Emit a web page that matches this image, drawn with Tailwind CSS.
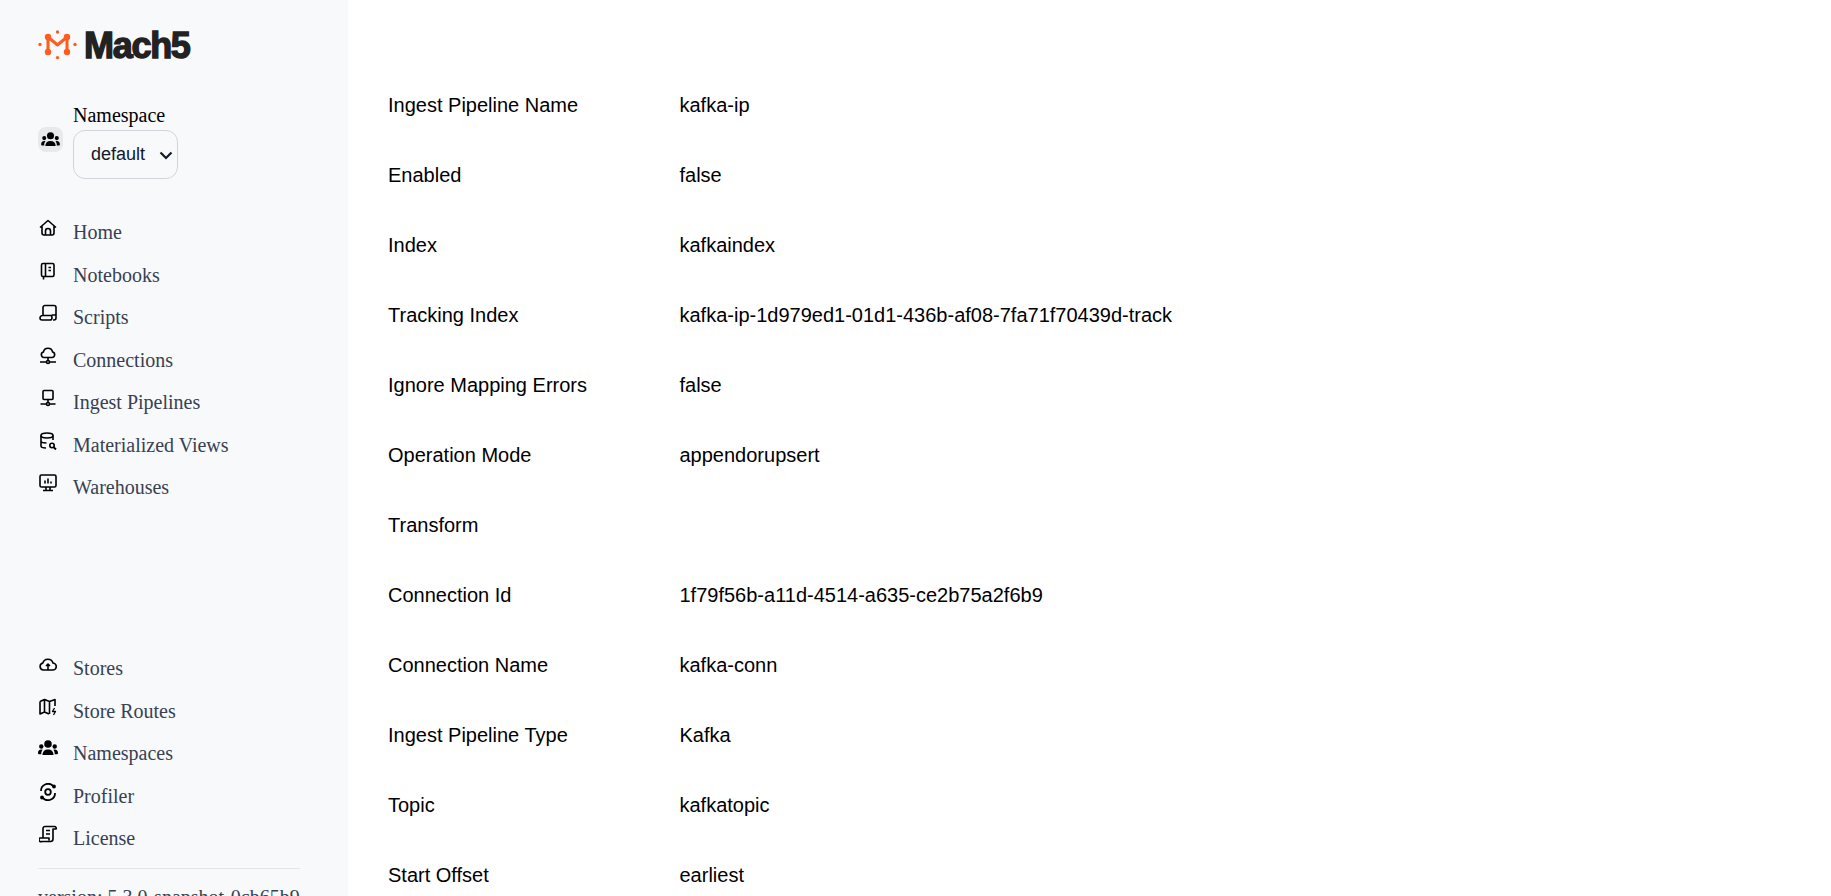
<!DOCTYPE html>
<html lang="en">
<head>
  <meta charset="UTF-8" />
  <title>Ingest Pipeline - Mach5</title>
  <script src="https://cdn.jsdelivr.net/npm/@tailwindcss/browser@4"></script>
</head>
<body class="h-screen overflow-hidden bg-white flex font-['Liberation_Serif',serif]">
  <!-- Sidebar -->
  <aside class="w-[348px] h-[896px] shrink-0 overflow-hidden bg-[#f8f9fb] pl-[38px] pr-[48px] pt-[28px] flex flex-col">
    <div class="flex items-center h-[34px]">
      <svg class="w-[40px] h-[30px]" viewBox="0 0 40 30" fill="none" stroke="#ff5c1f" stroke-width="3">
        <path d="M10 22 L10 7 L19.5 15 L29 7 L29 22" stroke-linejoin="round" />
        <g fill="#ff5c1f" stroke="none">
          <circle cx="10" cy="7" r="3.2" /><circle cx="29" cy="7" r="3.2" />
          <circle cx="10" cy="22" r="3.2" /><circle cx="29" cy="22" r="3.2" />
          <circle cx="19.5" cy="2" r="1.7" /><circle cx="19.5" cy="27.6" r="1.7" />
          <circle cx="2" cy="14.5" r="1.7" /><circle cx="37" cy="14.5" r="1.7" />
        </g>
      </svg>
      <span class="ml-[6px] mt-[2px] font-['Liberation_Sans',sans-serif] font-bold text-[36px] leading-none tracking-[-1.3px] text-[#222222] [-webkit-text-stroke:1.4px_#222222]">Mach5</span>
    </div>

    <div class="flex items-center mt-[41px]">
      <div class="w-[25px] h-[25px] mb-[4px] rounded-lg bg-[#e6eaed] flex items-center justify-center">
        <svg class="w-[19px] h-[15px]" viewBox="0 0 20 16" fill="#000"><circle cx="10" cy="4" r="3.8"/><circle cx="3.3" cy="6.5" r="2.2"/><circle cx="16.7" cy="6.5" r="2.2"/><path d="M4.5 15c0-3.500 2-5.500 5.500-5.500s5.500 2 5.500 5.500z"/><path d="M0 13c0-2 1.200-3.500 3.300-3.500.6 0 1 .1 1.400.3-.9 1-1.400 2.300-1.400 3.700v.8h-2C.5 14.300 0 13.800 0 13zM20 13c0-2-1.200-3.500-3.300-3.500-.6 0-1 .1-1.400.3.9 1 1.400 2.300 1.400 3.700v.8h2c.8 0 1.300-.5 1.300-1.300z"/></svg>
      </div>
      <div class="ml-[10px]">
        <div class="text-[20px] leading-[24px] text-black">Namespace</div>
        <div class="w-[105px] h-[49px] mt-[3px] rounded-[12px] border border-[#d1d5db] bg-[#f8f9fb] flex items-center justify-between pl-[17px] pr-[4px] font-['Liberation_Sans',sans-serif] text-[18px] text-[#111827]">
          <span>default</span>
          <svg class="w-[14px] h-[14px]" viewBox="0 0 14 14" fill="none" stroke="#111827" stroke-width="2.2"><path d="M1.500 4.500L7 10l5.500-5.500"/></svg>
        </div>
      </div>
    </div>

    <nav class="mt-[39px] text-[20px] leading-[28px] text-[#374151] flex flex-col gap-[14.5px]">
      <a class="flex items-start gap-[16px] pl-[1px]"><svg class="w-[18px] h-[18px] mt-[1px] shrink-0" viewBox="0 0 18 18" fill="none" stroke="#000" stroke-width="1.6" stroke-linejoin="round"><path d="M1 8.500L9 1.500l8 7M3 7v7a2 2 0 0 0 2 2h8a2 2 0 0 0 2-2V7M6.500 16v-4a2.500 2.500 0 0 1 5 0v4"/></svg>Home</a>
      <a class="flex items-start gap-[16px] pl-[1px]"><svg class="w-[18px] h-[18px] mt-[1px] shrink-0" viewBox="0 0 18 18" fill="none" stroke="#000" stroke-width="1.6"><path d="M4 1.500h9.500a1.500 1.500 0 0 1 1.500 1.500v10a1.500 1.500 0 0 1-1.500 1.500H4A1.500 1.500 0 0 1 2.500 13V3A1.500 1.500 0 0 1 4 1.500zM6.500 1.500v13M9.500 5.500H12M9.500 8.500H12M4.500 14.500v3"/></svg>Notebooks</a>
      <a class="flex items-start gap-[16px] pl-[1px]"><svg class="w-[18px] h-[18px] mt-[1px] shrink-0" viewBox="0 0 18 18" fill="none" stroke="#000" stroke-width="1.6" stroke-linejoin="round"><path d="M4 11V3.500a2 2 0 0 1 2-2h9a2 2 0 0 1 2 2V11h-4.500M1 14a2.500 2.500 0 0 1 2.500-2.500h8c1 0 1.500.7 1.500 2.200 0 1.300-.5 2.300-2 2.300H3A2 2 0 0 1 1 14zM14 16h1a2 2 0 0 0 2-2v-3"/></svg>Scripts</a>
      <a class="flex items-start gap-[16px] pl-[1px]"><svg class="w-[18px] h-[18px] mt-[1px] shrink-0" viewBox="0 0 18 18" fill="none" stroke="#000" stroke-width="1.6" stroke-linejoin="round"><path d="M5 10.500a2.800 2.800 0 0 1-.6-5.500 4.700 4.700 0 0 1 9.200 0 2.800 2.800 0 0 1-.6 5.500zM9 10.500V13M1 15h6M11 15h6"/><circle cx="9" cy="15" r="1.5"/></svg>Connections</a>
      <a class="flex items-start gap-[16px] pl-[1px]"><svg class="w-[18px] h-[18px] mt-[1px] shrink-0" viewBox="0 0 18 18" fill="none" stroke="#000" stroke-width="1.6" stroke-linejoin="round"><path d="M5 1.500h8a1 1 0 0 1 1 1v7a1 1 0 0 1-1 1H5a1 1 0 0 1-1-1v-7a1 1 0 0 1 1-1zM9 10.500V13M1.500 15H7M11 15h5.500"/><circle cx="9" cy="15" r="1.5"/></svg>Ingest Pipelines</a>
      <a class="flex items-start gap-[16px] pl-[1px]"><svg class="w-[18px] h-[18px] mt-[1px] shrink-0" viewBox="0 0 18 18" fill="none" stroke="#000" stroke-width="1.6"><ellipse cx="8" cy="3.5" rx="6" ry="2.5"/><path d="M2 3.500V14c0 1.200 2 2 5 2M14 3.500v4.500M2 9c0 1.200 2.500 2 5.500 2"/><circle cx="13" cy="13.5" r="2.2"/><path d="M14.600 15.100L17 17.500" stroke-width="2"/></svg>Materialized Views</a>
      <a class="flex items-start gap-[16px] pl-[1px]"><svg class="w-[18px] h-[18px] mt-[1px] shrink-0" viewBox="0 0 18 18" fill="none" stroke="#000" stroke-width="1.6" stroke-linejoin="round"><path d="M2.500 1h13A1.500 1.500 0 0 1 17 2.500v9a1.500 1.500 0 0 1-1.500 1.500h-13A1.500 1.500 0 0 1 1 11.500v-9A1.500 1.500 0 0 1 2.500 1zM7 13v3.500M11 13v3.500M4 16.500h10M6 9.500V6.500M9 9.500V4.500M12 9.500V7.500"/></svg>Warehouses</a>
    </nav>

    <nav class="mt-[153px] text-[20px] leading-[28px] text-[#374151] flex flex-col gap-[14.5px]">
      <a class="flex items-start gap-[16px] pl-[1px]"><svg class="w-[18px] h-[18px] mt-[1px] shrink-0" viewBox="0 0 18 18" fill="none" stroke="#000" stroke-width="1.6" stroke-linejoin="round"><path d="M4.500 15a3.500 3.500 0 0 1-.7-6.900 5.300 5.300 0 0 1 10.200-.1A3.500 3.500 0 0 1 13.500 15zM9 14.500v-5M7 11l2-2 2 2" /></svg>Stores</a>
      <a class="flex items-start gap-[16px] pl-[1px]"><svg class="w-[18px] h-[18px] mt-[1px] shrink-0" viewBox="0 0 18 18" fill="none" stroke="#000" stroke-width="1.6" stroke-linejoin="round"><path d="M1 3.500l4.500-2 5 2 5.500-2V8M1 3.500V16l4.500-2 4.500 2M5.500 1.500V14M10.500 3.500V16"/><path d="M15.500 10l-2 3.500h3L14.500 17" stroke-width="1.3"/></svg>Store Routes</a>
      <a class="flex items-start gap-[15px]"><svg class="w-[20px] h-[16px] shrink-0 mt-[1px]" viewBox="0 0 20 16" fill="#000"><circle cx="10" cy="4" r="3.8"/><circle cx="3.3" cy="6.5" r="2.2"/><circle cx="16.7" cy="6.5" r="2.2"/><path d="M4.500 15c0-3.500 2-5.500 5.500-5.500s5.500 2 5.500 5.500z"/><path d="M0 13c0-2 1.200-3.500 3.300-3.500.6 0 1 .1 1.400.3-.9 1-1.400 2.300-1.400 3.700v.8h-2C.5 14.300 0 13.800 0 13zM20 13c0-2-1.200-3.500-3.300-3.500-.6 0-1 .1-1.400.3.9 1 1.400 2.300 1.400 3.700v.8h2c.8 0 1.300-.5 1.300-1.300z"/></svg>Namespaces</a>
      <a class="flex items-start gap-[16px] pl-[1px]"><svg class="w-[18px] h-[18px] mt-[1px] shrink-0" viewBox="0 0 18 18" fill="none" stroke="#000" stroke-width="1.8"><circle cx="9" cy="9" r="2.8"/><path d="M2 8a7 7 0 0 1 12.500-4.500M16 10a7 7 0 0 1-12.500 4.500"/><circle cx="15" cy="3.5" r="1" fill="#000"/><circle cx="3" cy="14.5" r="1" fill="#000"/></svg>Profiler</a>
      <a class="flex items-start gap-[16px] pl-[1px]"><svg class="w-[18px] h-[18px] mt-[1px] shrink-0" viewBox="0 0 18 18" fill="none" stroke="#000" stroke-width="1.6" stroke-linejoin="round"><path d="M4 12.500V3.500a2 2 0 0 1 2-2h9.500a1.700 1.700 0 0 1 1.500 2.500h-3v10a2.500 2.500 0 0 1-2.500 2.500H3a2 2 0 0 1-2-3.500h9v2.500M7 5.500h4M7 9h4"/></svg>License</a>
    </nav>

    <div class="mt-[16px] w-[262px] border-t border-[#e5e7eb] pt-[14px] text-[20px] leading-[28px] text-[#374151] whitespace-nowrap">version: 5.3.0-snapshot-0cb65b9</div>
  </aside>

  <!-- Details -->
  <main class="flex-1 pl-[40px] pt-[70px] font-['Liberation_Sans',sans-serif] text-[20px] text-black">
    <dl class="flex flex-col">
      <div class="flex h-[70px] items-center"><dt class="w-[291.5px] shrink-0">Ingest Pipeline Name</dt><dd>kafka-ip</dd></div>
      <div class="flex h-[70px] items-center"><dt class="w-[291.5px] shrink-0">Enabled</dt><dd>false</dd></div>
      <div class="flex h-[70px] items-center"><dt class="w-[291.5px] shrink-0">Index</dt><dd>kafkaindex</dd></div>
      <div class="flex h-[70px] items-center"><dt class="w-[291.5px] shrink-0">Tracking Index</dt><dd>kafka-ip-1d979ed1-01d1-436b-af08-7fa71f70439d-track</dd></div>
      <div class="flex h-[70px] items-center"><dt class="w-[291.5px] shrink-0">Ignore Mapping Errors</dt><dd>false</dd></div>
      <div class="flex h-[70px] items-center"><dt class="w-[291.5px] shrink-0">Operation Mode</dt><dd>appendorupsert</dd></div>
      <div class="flex h-[70px] items-center"><dt class="w-[291.5px] shrink-0">Transform</dt><dd></dd></div>
      <div class="flex h-[70px] items-center"><dt class="w-[291.5px] shrink-0">Connection Id</dt><dd>1f79f56b-a11d-4514-a635-ce2b75a2f6b9</dd></div>
      <div class="flex h-[70px] items-center"><dt class="w-[291.5px] shrink-0">Connection Name</dt><dd>kafka-conn</dd></div>
      <div class="flex h-[70px] items-center"><dt class="w-[291.5px] shrink-0">Ingest Pipeline Type</dt><dd>Kafka</dd></div>
      <div class="flex h-[70px] items-center"><dt class="w-[291.5px] shrink-0">Topic</dt><dd>kafkatopic</dd></div>
      <div class="flex h-[70px] items-center"><dt class="w-[291.5px] shrink-0">Start Offset</dt><dd>earliest</dd></div>
    </dl>
  </main>
</body>
</html>
